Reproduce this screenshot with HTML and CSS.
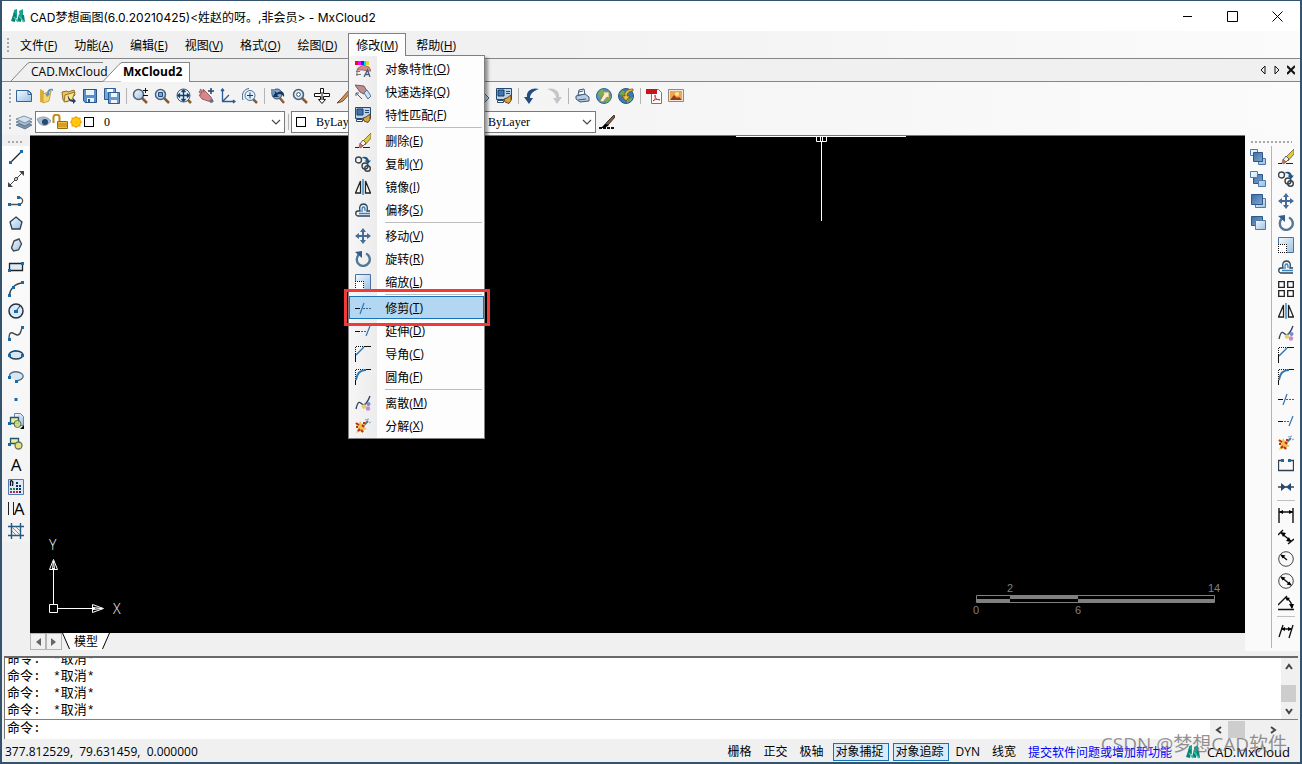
FILE: index.html
```html
<!DOCTYPE html>
<html lang="zh-CN">
<head>
    <meta charset="utf-8">
    <title>CAD梦想画图</title>
    <link rel="stylesheet" href="styles.css">
</head>
<body>
    <!-- Icon sprite -->
    <svg class="sprite" aria-hidden="true">
        <defs>
            <linearGradient id="gBlue" x1="0" y1="0" x2="1" y2="1"><stop offset="0" stop-color="#f4faff"/><stop offset="1" stop-color="#9cc0e2"/></linearGradient>
            <linearGradient id="gDark" x1="0" y1="0" x2="1" y2="1"><stop offset="0" stop-color="#3d6ea5"/><stop offset="1" stop-color="#7fa5d0"/></linearGradient>
        </defs>
        <symbol id="logo" viewBox="0 0 16 16"><path d="M4 2l3-1v9l-4 1zM9 3l4-2v9l-3 1z" fill="#12a58c"/><path d="M1 13l3-9 2 3-1 7zM7 13l2-7 2 3 0 5zM12 7l2 0 1 7-3-1z" fill="#0b7f70"/><path d="M4 9l4 5M9 8l5 6" stroke="#3cc4ac" stroke-width="1.5"/></symbol>
        <symbol id="new" viewBox="0 0 16 16"><path d="M.5 2.500h12l3 3v8H.5z" fill="url(#gBlue)" stroke="#33639a"/><path d="M12 2.500v4h3.500z" fill="#fff" stroke="#33639a"/></symbol>
        <symbol id="open" viewBox="0 0 16 16"><path d="M2 1l4 2v12l-4-1z" fill="#d9ad3c"/><path d="M5 6l8-3-2 10-6 2z" fill="#f7d66c" stroke="#d0a63a"/><path d="M15 1c-4-1-6 1-6 5l-2-1 2 4 3-3-1-1c0-2 1-3 4-2z" fill="#5e93c4"/></symbol>
        <symbol id="open2" viewBox="0 0 16 16"><path d="M2 4l5-1 1 1 6-2 1 5-8 7-4-2z" fill="#e9c65a" stroke="#92702a"/><path d="M5 7l10-3-3 8-8 2z" fill="#fae391" stroke="#92702a"/><path d="M8 7c1 4 3 5 5 5v-2l3 3-3 3v-2c-3 0-6-3-5-7z" fill="#234468"/></symbol>
        <symbol id="save" viewBox="0 0 16 16"><path d="M1.500 1.500h13v13H3l-1.500-2z" fill="#5990cc" stroke="#255489"/><path d="M4 2h8v5H4zM5 10h7v4H5z" fill="#e9f3fb"/><path d="M6 11h2v3H6z" fill="#255489"/></symbol>
        <symbol id="saveall" viewBox="0 0 16 16"><path d="M.5.5h11v11H.5z" fill="#7aa6d6" stroke="#2d5c91"/><path d="M3 1h6v3H3z" fill="#fff"/><path d="M4.500 4.500h11v11h-11z" fill="#6a9cd0" stroke="#2d5c91"/><path d="M7 5h6v4H7zM7 12h6v3H7z" fill="#eef6fc"/></symbol>
        <symbol id="lens" viewBox="0 0 16 16"><path d="M10 10l5 5" stroke="#8a5b33" stroke-width="2.500"/><circle cx="6.500" cy="6.500" r="5" fill="url(#gBlue)" stroke="#4c6178" stroke-width="1.500"/></symbol>
        <symbol id="zoomrt" viewBox="0 0 16 16"><use href="#lens"/><path d="M11 2.500h5M13.500 0v5M11 7.500h5" stroke="#111" fill="none"/></symbol>
        <symbol id="zoomwin" viewBox="0 0 16 16"><use href="#lens"/><path d="M4.500 4.500h4v4h-4z" fill="#7fa6cf" stroke="#1c4c80"/></symbol>
        <symbol id="zoomext" viewBox="0 0 16 16"><path d="M11 11l4 4" stroke="#8a5b33" stroke-width="2.500"/><circle cx="7.500" cy="7.500" r="6.500" fill="#e1eef9" stroke="#3f5a76"/><path d="M7.500 2v11M2 7.500h11M5.500 4l2-2 2 2M5.500 11l2 2 2-2M4 5.500l-2 2 2 2M11 5.500l2 2-2 2" stroke="#173e66" stroke-width="1.400" fill="none"/></symbol>
        <symbol id="pan" viewBox="0 0 16 16"><path d="M1 3l3 2-2-4 4 3-1-3 8 8 2 5-5-1-6-2-3-4 2 0z" fill="#d3868b" stroke="#a35c64"/><path d="M13 0v6M10 3h6" stroke="#23456b" stroke-width="1.500"/><path d="M12 14l3-2" stroke="#5f7387" stroke-width="3"/></symbol>
        <symbol id="ucs" viewBox="0 0 16 16"><path d="M2.500 1v12.500H15M2.500 13.500L9 7M1 3l1.500-2L4 3M13 12l2 1.500-2 1.500" fill="none" stroke="#2c5b94" stroke-width="1.300"/></symbol>
        <symbol id="zoomcen" viewBox="0 0 16 16"><path d="M11 11l4 4" stroke="#8a5b33" stroke-width="2.500"/><circle cx="8" cy="7.500" r="5" fill="#e5f0fa" stroke="#4573a5"/><path d="M8 4.500v6M5 7.500h6" stroke="#173e66"/><path d="M1 12C-1 6 2 1 7 .5" fill="none" stroke="#456789"/></symbol>
        <symbol id="zoomprev" viewBox="0 0 16 16"><path d="M9 9l5 6" stroke="#8a5b33" stroke-width="2.500"/><circle cx="7" cy="6" r="5" fill="#84aacf" stroke="#35506d"/><path d="M14 9c1-5-3-7-7-4L5 3 3 9l6 0-2-2c3-2 5-1 7 2z" fill="#18365c"/><path d="M1 1h4v5H1z" fill="#6f93bb"/></symbol>
        <symbol id="zoomall" viewBox="0 0 16 16"><use href="#lens"/><circle cx="6.500" cy="6.500" r="3" fill="#667c91" stroke="#fff"/><path d="M5 6.500h3M6.500 5v3" stroke="#fff"/></symbol>
        <symbol id="cross3" viewBox="0 0 16 16"><path d="M6.500.5h3v5h6v3h-6v3h2l-3.500 4-3.500-4h2v-3h-6v-3h6z" fill="#fff" stroke="#111"/><path d="M8 4v8" stroke="#111"/></symbol>
        <symbol id="pencil" viewBox="0 0 16 16"><path d="M14 1L5 11l-4 4c3-1 5-1 6-2l9-10z" fill="#d7924c" stroke="#6b4a2b"/></symbol>
        <symbol id="match" viewBox="0 0 16 16"><path d="M.5.5h15v11H.5z" fill="#bcd4ea" stroke="#26496f"/><path d="M2 2h6v6H2z" fill="#3f75b3" stroke="#1c3a5c"/><path d="M10 3.500h4M10 5.500h4" stroke="#26496f"/><path d="M1.500 12.500h6v2h-6z" fill="#fff" stroke="#26496f"/><path d="M15 7l-4 3-3 1 1 3 4 1.500 2-3z" fill="#d9a441" stroke="#67441a"/></symbol>
        <symbol id="eraserb" viewBox="0 0 16 16"><path d="M3 5l4-3 8 8-4 4z" fill="#c6dcef" stroke="#48698c"/></symbol>
        <symbol id="undo" viewBox="0 0 16 16"><path d="M15 1C8-1 2 3 3 9H0l5 7 4-6H6c0-4 3-7 9-9z" fill="#234d80"/></symbol>
        <symbol id="redo" viewBox="0 0 16 16"><path d="M1 1c7-2 13 2 12 8h3l-5 7-4-6h3c0-4-3-7-9-9z" fill="#c3c6ca"/></symbol>
        <symbol id="print" viewBox="0 0 16 16"><path d="M4 7l1-5 5-1 1 6z" fill="#fff" stroke="#3b5679"/><path d="M2 8l9-2 4 3v4l-9 1-4-3z" fill="#b9cbe0" stroke="#3b5679"/><path d="M4 12l8-1M5 4l4-1" stroke="#3b5679"/></symbol>
        <symbol id="globe1" viewBox="0 0 16 16"><circle cx="8" cy="8" r="7.500" fill="#4f8fc6" stroke="#35648f"/><path d="M2 5l4-4 3 3-3 4-3 2zM9 11l6-3-1 4-4 3z" fill="#7cae4c"/><path d="M4 13l4-7-1-2h6v6l-2-1-4 5z" fill="#f6efc8" stroke="#b78a36" stroke-width=".8"/></symbol>
        <symbol id="globe2" viewBox="0 0 16 16"><circle cx="8" cy="8" r="7.500" fill="#3b7bb0" stroke="#2b567d"/><path d="M1 6l4-4 3 4-3 2zM9 12l6-3-2 4-4 2z" fill="#76a845"/><path d="M15 1c-6 0-9 3-8 7H4l4 5 4-5H9c0-3 2-5 6-5z" fill="#f2c23c" stroke="#75551a" stroke-width=".8"/></symbol>
        <symbol id="pdf" viewBox="0 0 16 16"><path d="M5.500 1.500h7l3 3v11h-10z" fill="#fff" stroke="#777"/><path d="M0 1h11v5H0z" fill="#c7131a"/><path d="M7 13c3-2 3-6 2-6s0 5 5 5c1 0-3-2-7 1z" fill="none" stroke="#d2383d"/></symbol>
        <symbol id="image" viewBox="0 0 16 16"><path d="M.5 1.500h15v12H.5z" fill="#f1e7da" stroke="#8d8984"/><path d="M2 3h12v9H2z" fill="#f0a54b"/><path d="M2 12l4-5 3 3 2-1 3 3z" fill="#983a21"/><circle cx="9" cy="6" r="2" fill="#fce6a1"/></symbol>
        <symbol id="layers" viewBox="0 0 16 16"><path d="M0 11l8-3 8 3-7 4z" fill="#7f93a8" stroke="#45617e" stroke-width=".7"/><path d="M0 8l8-3 8 3-7 4z" fill="#a9bdd0" stroke="#45617e" stroke-width=".7"/><path d="M0 5l8-3 8 3-7 4z" fill="#d3e2ef" stroke="#55718e" stroke-width=".7"/></symbol>
        <symbol id="eye" viewBox="0 0 16 16"><path d="M1 5c5-3 10-3 14 2-4 6-9 5-12 2z" fill="#a8bed4" stroke="#8da2b8"/><circle cx="9" cy="8" r="3" fill="#28496d"/></symbol>
        <symbol id="lock" viewBox="0 0 16 16"><path d="M1.500 9V3c0-3 6-3 6 0v4" fill="none" stroke="#c08a1c" stroke-width="2"/><path d="M5.500 7.500h10v7h-10z" fill="#f1bd3c" stroke="#9b6b0c"/><path d="M6 10h9M6 12h9" stroke="#b78016"/></symbol>
        <symbol id="sun" viewBox="0 0 16 16"><path d="M8 2l2 1.500 2.500 0 0 2.500L14 8l-1.500 2v2.500H10L8 14l-2-1.500H3.500V10L2 8l1.500-2V3.500H6z" fill="#fc9f0b"/><circle cx="8" cy="8" r="4" fill="#ffc90c"/></symbol>
        <symbol id="lwt" viewBox="0 0 16 16"><path d="M15 1L8 8l-3 4 4-1 7-8z" fill="#8a5a34" stroke="#333"/><path d="M0 14h16" stroke="#111" stroke-width="2" stroke-dasharray="3 1"/><path d="M6 10l4 1-4 3H2z"/></symbol>
        <symbol id="line" viewBox="0 0 16 16"><path d="M2 14L14 2" stroke="#222" stroke-width="1.300"/><path d="M1 12h3v3H1zM12 1h3v3h-3z" fill="#1b6aa8"/></symbol>
        <symbol id="xline" viewBox="0 0 16 16"><path d="M1 15L15 1" stroke="#444"/><path d="M0 16v-5l5 5zM16 0v5l-5-5z" fill="#444"/><circle cx="8" cy="8" r="1.500" fill="#fff" stroke="#333"/></symbol>
        <symbol id="pline" viewBox="0 0 16 16"><path d="M1 11.500h9c6 0 6-7 1-7" fill="none" stroke="#555" stroke-width="1.300"/><path d="M0 10h3v3H0zM10 10h3v3h-3zM9 3h3v3H9z" fill="#1b6aa8"/></symbol>
        <symbol id="polygon" viewBox="0 0 16 16"><path d="M8 2l6 5-2 7H4L2 7z" fill="url(#gBlue)" stroke="#2d4050" stroke-width="1.300"/></symbol>
        <symbol id="polyline2" viewBox="0 0 16 16"><path d="M6 4l5-2 2.500 5-3 6-5 1-2-3z" fill="url(#gBlue)" stroke="#444c52" stroke-width="1.400"/></symbol>
        <symbol id="rect" viewBox="0 0 16 16"><path d="M1.500 4.500h13v7h-13z" fill="#dcecfa" stroke="#222" stroke-width="1.300"/><path d="M0 10h3v3H0zM13 3h3v3h-3z" fill="#1b6aa8"/></symbol>
        <symbol id="arc" viewBox="0 0 16 16"><path d="M1.500 14C2 8 7 2 15 2" fill="none" stroke="#444" stroke-width="1.500"/><path d="M0 13h3v3H0zM4 5h3v3H4zM13 0h3v3h-3z" fill="#1b6aa8"/></symbol>
        <symbol id="circle" viewBox="0 0 16 16"><circle cx="8" cy="8" r="7" fill="#d9ebfa" stroke="#26333e" stroke-width="1.500"/><path d="M8 8l4-5" stroke="#26333e"/><path d="M6 7h4v3H6z" fill="#1b6aa8"/></symbol>
        <symbol id="spline" viewBox="0 0 16 16"><path d="M1 14c0-12 6-3 9-4 4-1 2-6 5-8" fill="none" stroke="#444" stroke-width="1.400"/><path d="M0 13h3v3H0zM13 1h3v3h-3z" fill="#1b6aa8"/></symbol>
        <symbol id="ellipse" viewBox="0 0 16 16"><ellipse cx="8" cy="8" rx="7" ry="4" fill="#d5e6f4" stroke="#303c47" stroke-width="1.400"/><path d="M0 7h3v3H0zM13 7h3v3h-3zM6 3h3v2H6z" fill="#1b6aa8"/></symbol>
        <symbol id="earc" viewBox="0 0 16 16"><path d="M2 8C0 4 6 2 10 3c8 2 6 8-2 9" fill="#d5e6f4" stroke="#5b6e80" stroke-width="1.400"/><path d="M0 7h3v3H0zM7 11h3v3H7z" fill="#1b6aa8"/></symbol>
        <symbol id="point" viewBox="0 0 16 16"><path d="M6.500 7h3v3h-3z" fill="#1b6aa8"/></symbol>
        <symbol id="block" viewBox="0 0 16 16"><path d="M6.500.5h6l3 3v9h-9z" fill="url(#gBlue)" stroke="#5d88b8"/><path d="M2.500 4.500h8v6h-8z" fill="#f1ef94" stroke="#26576f" stroke-width="1.300"/><circle cx="9.500" cy="11" r="3.500" fill="#dfe67f" fill-opacity=".8" stroke="#4c6b53"/><path d="M0 9h3v3H0z" fill="#1b6aa8"/><path d="M16 12v4h-4z"/></symbol>
        <symbol id="insert" viewBox="0 0 16 16"><path d="M2.500 3.500h8v5h-8z" fill="#f1ef94" stroke="#26576f" stroke-width="1.300"/><circle cx="10.500" cy="10.500" r="3.500" fill="#dfe67f" stroke="#637162" stroke-width="1.300"/><path d="M0 8h3v3H0z" fill="#1b6aa8"/></symbol>
        <symbol id="table" viewBox="0 0 16 16"><path d="M.5.5h15v15H.5z" fill="#dce9fa" stroke="#4e7bb8"/><path d="M2.500 7V2c2-1 3 1 2 5" fill="none" stroke="#111" stroke-width="1.300"/><path d="M8 3h2v2H8zM8 6h2v2H8zM11 6h2v2h-2zM11 9h2v2h-2zM8 9h2v2H8zM11 12h2v2h-2z" fill="#1b315c"/><path d="M2 12h2v2H2zM5 12h2v2H5zM8 12h2v2H8z" fill="#c3273d"/><path d="M2 9h2v2H2zM5 9h2v2H5z" fill="#2a7b43"/></symbol>
        <symbol id="hatch" viewBox="0 0 16 16"><path d="M3.500 0v16M12.500 0v16M0 3.500h16M0 12.500h16" stroke="#245a82" stroke-width="1.400"/><path d="M4 8l4 4M4 4l8 8M8 4l4 4" stroke="#5c9ac5"/></symbol>
        <symbol id="front1" viewBox="0 0 16 16"><path d="M.5.5h7v6h-7zM8.500 9.500h7v6h-7z" fill="url(#gBlue)" stroke="#4c7aa9"/><path d="M3.500 3.500h9v9h-9z" fill="url(#gDark)" stroke="#2d5788"/></symbol>
        <symbol id="front2" viewBox="0 0 16 16"><path d="M3.500 3.500h9v9h-9z" fill="url(#gDark)" stroke="#2d5788"/><path d="M.5.5h7v6h-7zM8.500 9.500h7v6h-7z" fill="url(#gBlue)" stroke="#4c7aa9"/></symbol>
        <symbol id="front3" viewBox="0 0 16 16"><path d="M5.500 5.500h10v9h-10z" fill="url(#gBlue)" stroke="#4c7aa9"/><path d="M1.500 1.500h11v10h-11z" fill="url(#gDark)" stroke="#2d5788"/></symbol>
        <symbol id="front4" viewBox="0 0 16 16"><path d="M1.500 1.500h11v9h-11z" fill="url(#gDark)" stroke="#2d5788"/><path d="M5.500 5.500h10v9h-10z" fill="url(#gBlue)" stroke="#4c7aa9"/></symbol>
        <symbol id="erase" viewBox="0 0 16 16"><path d="M16 0v5l-6 7-3-3z" fill="#e2c93b" stroke="#6b6130" stroke-width=".8"/><path d="M8 7l3 3-3 3-3-2z" fill="#f3f3f3" stroke="#444" stroke-width=".8"/><path d="M5 10l3 3-2 2-2-1z" fill="#c97363" stroke="#7c3c33" stroke-width=".5"/><path d="M0 14.500h4M8 14.500h7" stroke="#222"/></symbol>
        <symbol id="copy" viewBox="0 0 16 16"><g fill="none" stroke="#39424a" stroke-width="1.400"><circle cx="3.500" cy="4" r="3"/><circle cx="10" cy="10" r="3"/><circle cx="12.500" cy="12.500" r="2.800"/></g><path d="M6 2.500c3-3 7-2 8 2h2L13 8 9.500 4.500h2C10 2 8 2 6 2.500z" fill="#1d5384"/></symbol>
        <symbol id="mirror" viewBox="0 0 16 16"><path d="M5.500 2v12h-5zM10.500 2v12h5z" fill="#fff" stroke="#222" stroke-width="1.300"/><path d="M8 0v16" stroke="#3988bd" stroke-width="1.500"/></symbol>
        <symbol id="offset" viewBox="0 0 16 16"><path d="M15 14H3c-3 0-3-5 0-5h2c-1-4 0-7 3.500-7S13 5 12 9h3" fill="none" stroke="#26435c" stroke-width="1.300"/><path d="M15 11.500H4M7 10c0-4 0-5 1.500-5S10 6 10 9" fill="none" stroke="#3a84c2" stroke-width="1.300"/></symbol>
        <symbol id="move" viewBox="0 0 16 16"><path d="M8 0l3 4H9v3h3V5l4 3-4 3V9H9v3h2l-3 4-3-4h2V9H4v2L0 8l4-3v2h3V4H5z" fill="#456c97"/></symbol>
        <symbol id="rotate" viewBox="0 0 16 16"><path d="M11 2.500a6.500 6.500 0 1 1-7 1" fill="none" stroke="#537596" stroke-width="2.400"/><path d="M0 1l7-1v7z" fill="#315c8b"/></symbol>
        <symbol id="scale" viewBox="0 0 16 16"><path d="M.5.5h15v15H.5z" fill="url(#gBlue)" stroke="#4772a3"/><path d="M0 7h9v9H0z" fill="#fff"/><path d="M0 7.500h9M0 15.500h9M.5 7v9M8.500 7v9" stroke="#111" stroke-dasharray="1 1"/></symbol>
        <symbol id="array" viewBox="0 0 16 16"><path d="M.7.7h5.600v5.600H.7zM9.700.7h5.600v5.600H9.700zM.7 9.700h5.600v5.600H.7zM9.700 9.700h5.600v5.600H9.700z" fill="#fff" stroke="#222" stroke-width="1.300"/></symbol>
        <symbol id="disc" viewBox="0 0 16 16"><path d="M1 14C3 5 5 7 7 9s5 0 8-8" fill="none" stroke="#33415c" stroke-width="1.300"/><circle cx="9" cy="11.500" r="2.300" fill="#e3cf6d"/><circle cx="13.500" cy="9" r="2" fill="#6f8fd0"/><circle cx="13" cy="13.500" r="2.200" fill="#c98acb"/></symbol>
        <symbol id="chamfer" viewBox="0 0 16 16"><path d="M.5 10V.5H10" fill="none" stroke="#111" stroke-dasharray="1 1"/><path d="M.5 16V8M9 .5h7" stroke="#111"/><path d="M1 9l8-8" stroke="#2f76b5" stroke-width="1.500"/></symbol>
        <symbol id="fillet" viewBox="0 0 16 16"><path d="M.5 10V.5H10" fill="none" stroke="#111" stroke-dasharray="1 1"/><path d="M.5 16v-5M11 .5h5" stroke="#111"/><path d="M1 11C2 4 6 1 11 1" fill="none" stroke="#2f76b5" stroke-width="1.800"/></symbol>
        <symbol id="trim" viewBox="0 0 16 16"><path d="M0 8.500h5" stroke="#111"/><path d="M8 8.500h8" stroke="#28659b" stroke-dasharray="2 1"/><path d="M5 14L9 3" stroke="#2f76b5" stroke-width="1.200"/></symbol>
        <symbol id="extend" viewBox="0 0 16 16"><path d="M0 8.500h5" stroke="#111"/><path d="M6 8.500h6" stroke="#28659b" stroke-dasharray="2 1"/><path d="M11 13l4-10" stroke="#2f76b5" stroke-width="1.200"/></symbol>
        <symbol id="explode" viewBox="0 0 16 16"><path d="M6 10l7-7" stroke="#58708a" stroke-width="2"/><path d="M10 2l4-1M14 5l2-1" stroke="#77a2c9"/><path d="M0 5l4 1 1-3 2 3 3-1-1 4 3 2-3 1-1 3-2-2-5 2 2-5z" fill="#ecc34b"/><path d="M1 5l3 2M7 7l2 2M3 13l2-2M6 12l2 2M1 9h2M8 5h2" stroke="#b92e26" stroke-width="2"/></symbol>
        <symbol id="break" viewBox="0 0 16 16"><path d="M4 3.500H.5v10h15v-10H12" fill="none" stroke="#33404d" stroke-width="1.300"/><path d="M3 2h3v3H3zM10 2h3v3h-3z" fill="#1b6aa8"/></symbol>
        <symbol id="join" viewBox="0 0 16 16"><path d="M0 8h16" stroke="#222" stroke-width="1.300"/><path d="M3 4l5 4-5 4zM13 4L8 8l5 4z" fill="#234a6f"/></symbol>
        <symbol id="dimlin" viewBox="0 0 16 16"><path d="M1 1v15M15 1v15M1 5h14" fill="none" stroke="#111" stroke-width="1.400"/><path d="M1 5l4-2v4zM15 5l-4-2v4z"/></symbol>
        <symbol id="dimalign" viewBox="0 0 16 16"><path d="M0 6l5-5M10 15l6-5M3 4l10 8" stroke="#111" stroke-width="1.400"/><path d="M3 3l5 1-3 4zM13 13l-5-1 3-4z"/></symbol>
        <symbol id="dimrad" viewBox="0 0 16 16"><circle cx="8" cy="8" r="7.300" fill="#f8f8f8" stroke="#444"/><path d="M3 4l6 5" stroke="#111" stroke-width="1.400"/><path d="M2.500 3.500l5 1-3 3z"/></symbol>
        <symbol id="dimdia" viewBox="0 0 16 16"><circle cx="8" cy="8" r="7.300" fill="#f8f8f8" stroke="#444"/><path d="M3 4l10 8" stroke="#111" stroke-width="1.400"/><path d="M2.500 3.500l5 1-3 3zM13.500 12.500l-5-1 3-3z"/></symbol>
        <symbol id="dimang" viewBox="0 0 16 16"><path d="M0 14.500h16M0 10L9 1M8 3c4 2 6 5 6 10" fill="none" stroke="#111" stroke-width="1.300"/><path d="M7 2l5 1-3 3zM14 14l-3-5h5z"/></symbol>
        <symbol id="dimedit" viewBox="0 0 16 16"><path d="M1 14L5 2M11 15l4-13M3 6h11" stroke="#111" stroke-width="1.300"/><path d="M3 6l4-2v4zM14 6l-4-2v4z"/></symbol>
        <symbol id="props" viewBox="0 0 16 16"><path d="M0 0h4v4H0z" fill="#e11"/><path d="M3 0h3v4H3z" fill="#f0f"/><path d="M6 0h3v4H6z" fill="#22f"/><path d="M9 0h3v4H9z" fill="#0df"/><path d="M11 0h3v4h-3z" fill="#dd2"/><path d="M3 7l5-3 6 2 2 4-4 0-4-1-6 0z" fill="#d28b86" stroke="#8f5b5b" stroke-width=".8"/><path d="M1 10.500h4M1 13.500h5M2 9v6" stroke="#777"/><path d="M9 16l3.500-7L15 16M10.500 13.500H14" fill="none" stroke="#4a5e76" stroke-width="1.300"/></symbol>
        <symbol id="qselect" viewBox="0 0 16 16"><path d="M0 1l9 1 3 5-3 3-4-2z" fill="#bd8d90" stroke="#7d585d"/><path d="M9 9l3-3 4 6-3 3z" fill="#cfe1f1" stroke="#55718e"/><path d="M1 9l6 6M1 12V9h3" fill="none" stroke="#4a5e76"/></symbol>
        <symbol id="chev" viewBox="0 0 10 10"><path d="M1 3l4 4 4-4" fill="none" stroke="#444" stroke-width="1.100"/></symbol>
    </svg>

    <div class="app">
        <div class="titlebar">
            <svg class="logo"><use href="#logo"/></svg>
            <span class="title">CAD梦想画图(6.0.20210425)&lt;姓赵的呀。,非会员&gt; - MxCloud2</span>
            <div class="winbtns">
                <button aria-label="最小化"><svg viewBox="0 0 11 11"><path d="M1 5.500h9"/></svg></button>
                <button aria-label="最大化"><svg viewBox="0 0 11 11"><path d="M.5.5h10v10H.5z"/></svg></button>
                <button aria-label="关闭"><svg viewBox="0 0 11 11"><path d="M.5.5l10 10M10.500.5l-10 10"/></svg></button>
            </div>
        </div>

        <nav class="menubar">
            <button>文件(<u>F</u>)</button>
            <button>功能(<u>A</u>)</button>
            <button>编辑(<u>E</u>)</button>
            <button>视图(<u>V</u>)</button>
            <button>格式(<u>O</u>)</button>
            <button>绘图(<u>D</u>)</button>
            <div class="menu">
                <button class="open">修改(<u>M</u>)</button>
                <div class="dropdown">
                    <button><svg><use href="#props"/></svg>对象特性(<u>O</u>)</button>
                    <button><svg><use href="#qselect"/></svg>快速选择(<u>Q</u>)</button>
                    <button><svg><use href="#match"/></svg>特性匹配(<u>F</u>)</button>
                    <hr>
                    <button><svg><use href="#erase"/></svg>删除(<u>E</u>)</button>
                    <button><svg><use href="#copy"/></svg>复制(<u>Y</u>)</button>
                    <button><svg><use href="#mirror"/></svg>镜像(<u>I</u>)</button>
                    <button><svg><use href="#offset"/></svg>偏移(<u>S</u>)</button>
                    <hr>
                    <button><svg><use href="#move"/></svg>移动(<u>V</u>)</button>
                    <button><svg><use href="#rotate"/></svg>旋转(<u>R</u>)</button>
                    <button><svg><use href="#scale"/></svg>缩放(<u>L</u>)</button>
                    <hr>
                    <button class="active"><svg><use href="#trim"/></svg>修剪(<u>T</u>)</button>
                    <button><svg><use href="#extend"/></svg>延伸(<u>D</u>)</button>
                    <button><svg><use href="#chamfer"/></svg>导角(<u>C</u>)</button>
                    <button><svg><use href="#fillet"/></svg>圆角(<u>F</u>)</button>
                    <hr>
                    <button><svg><use href="#disc"/></svg>离散(<u>M</u>)</button>
                    <button><svg><use href="#explode"/></svg>分解(<u>X</u>)</button>
                </div>
            </div>
            <button>帮助(<u>H</u>)</button>
        </nav>

        <div class="tabs">
            <button class="tab"><svg class="slope" viewBox="0 0 18 19"><path d="M0 19L16 2l2-1.500"/></svg><span>CAD.MxCloud</span></button>
            <button class="tab current"><svg class="slope" viewBox="0 0 18 19"><path d="M0 19L16 2l2-1.500V19z" stroke="none"/><path d="M0 19L16 2l2-1.500"/></svg><span>MxCloud2</span></button>
            <div class="tabnav">
                <button aria-label="上一个"><svg viewBox="0 0 8 10"><path d="M6 1L2 5l4 4z"/></svg></button>
                <button aria-label="下一个"><svg viewBox="0 0 8 10"><path d="M2 1l4 4-4 4z"/></svg></button>
                <button aria-label="关闭标签"><svg viewBox="0 0 8 10"><path class="thick" d="M0 1l8 8M8 1L0 9"/></svg></button>
            </div>
        </div>

        <div class="toolbar">
            <span class="grip"></span>
            <button aria-label="新建"><svg><use href="#new"/></svg></button>
            <button aria-label="打开"><svg><use href="#open"/></svg></button>
            <button aria-label="打开云图"><svg><use href="#open2"/></svg></button>
            <button aria-label="保存"><svg><use href="#save"/></svg></button>
            <button aria-label="另存为"><svg><use href="#saveall"/></svg></button>
            <span class="sep"></span>
            <button aria-label="实时缩放"><svg><use href="#zoomrt"/></svg></button>
            <button aria-label="窗口缩放"><svg><use href="#zoomwin"/></svg></button>
            <button aria-label="范围缩放"><svg><use href="#zoomext"/></svg></button>
            <button aria-label="平移"><svg><use href="#pan"/></svg></button>
            <button aria-label="坐标系"><svg><use href="#ucs"/></svg></button>
            <button aria-label="中心缩放"><svg><use href="#zoomcen"/></svg></button>
            <span class="sep"></span>
            <button aria-label="上一视图"><svg><use href="#zoomprev"/></svg></button>
            <button aria-label="全部缩放"><svg><use href="#zoomall"/></svg></button>
            <button aria-label="定位"><svg><use href="#cross3"/></svg></button>
            <button aria-label="绘制"><svg><use href="#pencil"/></svg></button>
            <button aria-label="复制"><svg><use href="#copy"/></svg></button>
            <button aria-label="移动"><svg><use href="#move"/></svg></button>
            <button aria-label="旋转"><svg><use href="#rotate"/></svg></button>
            <button aria-label="镜像"><svg><use href="#mirror"/></svg></button>
            <span class="sep"></span>
            <button aria-label="特性"><svg><use href="#props"/></svg></button>
            <button aria-label="橡皮"><svg><use href="#eraserb"/></svg></button>
            <button aria-label="特性匹配"><svg><use href="#match"/></svg></button>
            <span class="sep"></span>
            <button aria-label="撤销"><svg><use href="#undo"/></svg></button>
            <button aria-label="重做"><svg><use href="#redo"/></svg></button>
            <span class="sep"></span>
            <button aria-label="打印"><svg><use href="#print"/></svg></button>
            <button aria-label="发布"><svg><use href="#globe1"/></svg></button>
            <button aria-label="下载"><svg><use href="#globe2"/></svg></button>
            <span class="sep"></span>
            <button aria-label="输出PDF"><svg><use href="#pdf"/></svg></button>
            <button aria-label="输出图片"><svg><use href="#image"/></svg></button>
        </div>

        <div class="toolbar props">
            <span class="grip"></span>
            <button aria-label="图层"><svg><use href="#layers"/></svg></button>
            <div class="combo layer">
                <svg><use href="#eye"/></svg><svg><use href="#lock"/></svg><svg><use href="#sun"/></svg>
                <span class="swatch"></span>
                <select aria-label="当前图层"><option>0</option></select>
                <svg class="chev"><use href="#chev"/></svg>
            </div>
            <span class="sep"></span>
            <div class="combo color">
                <span class="swatch"></span>
                <select aria-label="颜色"><option>ByLayer</option></select>
                <svg class="chev"><use href="#chev"/></svg>
            </div>
            <span class="sep"></span>
            <div class="combo ltype">
                <select aria-label="线型"><option>ByLayer</option></select>
                <svg class="chev"><use href="#chev"/></svg>
            </div>
            <button aria-label="线宽"><svg><use href="#lwt"/></svg></button>
        </div>

        <div class="main">
            <div class="side left">
                <span class="grip"></span>
                <div class="tools">
                    <button aria-label="直线"><svg><use href="#line"/></svg></button>
                    <button aria-label="构造线"><svg><use href="#xline"/></svg></button>
                    <button aria-label="多段线"><svg><use href="#pline"/></svg></button>
                    <button aria-label="正多边形"><svg><use href="#polygon"/></svg></button>
                    <button aria-label="多边形"><svg><use href="#polyline2"/></svg></button>
                    <button aria-label="矩形"><svg><use href="#rect"/></svg></button>
                    <button aria-label="圆弧"><svg><use href="#arc"/></svg></button>
                    <button aria-label="圆"><svg><use href="#circle"/></svg></button>
                    <button aria-label="样条曲线"><svg><use href="#spline"/></svg></button>
                    <button aria-label="椭圆"><svg><use href="#ellipse"/></svg></button>
                    <button aria-label="椭圆弧"><svg><use href="#earc"/></svg></button>
                    <button aria-label="点"><svg><use href="#point"/></svg></button>
                    <button aria-label="创建块"><svg><use href="#block"/></svg></button>
                    <button aria-label="插入块"><svg><use href="#insert"/></svg></button>
                    <button class="letter">A</button>
                    <button aria-label="图片"><svg><use href="#table"/></svg></button>
                    <button class="letter bar">A</button>
                    <button aria-label="填充"><svg><use href="#hatch"/></svg></button>
                </div>
            </div>

            <div class="center">
                <div class="canvas">
                    <svg class="cursor" viewBox="0 0 170 85">
                        <path d="M0 .5h170M85.500 6v79M80.500 0v5.500h10V0M84.500 0v5M86.500 0v5"/>
                    </svg>
                    <svg class="axes" viewBox="0 0 80 80">
                        <path d="M5.500 68V32M10 72.500h37M1.500 68.500h8v8h-8zM1.500 33.500l4-10 4 10zM4.500 33l1-8 1 8M44.500 68.500l11 4-11 4zM45 71.500l9 1-9 1"/>
                        <text x="1" y="14">Y</text>
                        <text x="65" y="78">X</text>
                    </svg>
                    <svg class="ruler" viewBox="0 0 246 34">
                        <path class="frame" d="M2.500 12.500h238v7h-238z"/>
                        <path class="fill" d="M3 16h33v3H3zM36 13h68v3H36zM104 16h136v3H104z"/>
                        <text x="33" y="9">2</text><text x="234" y="9">14</text>
                        <text x="-1" y="31">0</text><text x="101" y="31">6</text>
                    </svg>
                </div>
                <div class="modelrow">
                    <button class="arrow" aria-label="向左"><svg viewBox="0 0 8 10"><path d="M7 1L2 5l5 4z"/></svg></button>
                    <button class="arrow" aria-label="向右"><svg viewBox="0 0 8 10"><path d="M1 1l5 4-5 4z"/></svg></button>
                    <svg class="edge" viewBox="0 0 8 17"><path d="M0 0l7 16h1V0z"/><path class="ln" d="M.5 0l7 16"/></svg>
                    <button class="model">模型</button>
                    <svg class="edge" viewBox="0 0 8 17"><path d="M0 0h8L1 16H0z"/><path class="ln" d="M7.500 0l-7 16"/></svg>
                </div>
            </div>

            <div class="side right">
                <span class="grip"></span>
                <div class="cols">
                    <div class="tools">
                        <button aria-label="前置"><svg><use href="#front1"/></svg></button>
                        <button aria-label="后置"><svg><use href="#front2"/></svg></button>
                        <button aria-label="置于对象之上"><svg><use href="#front3"/></svg></button>
                        <button aria-label="置于对象之下"><svg><use href="#front4"/></svg></button>
                    </div>
                    <div class="tools">
                        <button aria-label="删除"><svg><use href="#erase"/></svg></button>
                        <button aria-label="复制"><svg><use href="#copy"/></svg></button>
                        <button aria-label="移动"><svg><use href="#move"/></svg></button>
                        <button aria-label="旋转"><svg><use href="#rotate"/></svg></button>
                        <button aria-label="缩放"><svg><use href="#scale"/></svg></button>
                        <button aria-label="偏移"><svg><use href="#offset"/></svg></button>
                        <button aria-label="阵列"><svg><use href="#array"/></svg></button>
                        <button aria-label="镜像"><svg><use href="#mirror"/></svg></button>
                        <button aria-label="离散"><svg><use href="#disc"/></svg></button>
                        <button aria-label="导角"><svg><use href="#chamfer"/></svg></button>
                        <button aria-label="圆角"><svg><use href="#fillet"/></svg></button>
                        <button aria-label="修剪"><svg><use href="#trim"/></svg></button>
                        <button aria-label="延伸"><svg><use href="#extend"/></svg></button>
                        <button aria-label="分解"><svg><use href="#explode"/></svg></button>
                        <button aria-label="打断"><svg><use href="#break"/></svg></button>
                        <button aria-label="合并"><svg><use href="#join"/></svg></button>
                        <span class="hsep"></span>
                        <button aria-label="线性标注"><svg><use href="#dimlin"/></svg></button>
                        <button aria-label="对齐标注"><svg><use href="#dimalign"/></svg></button>
                        <button aria-label="半径标注"><svg><use href="#dimrad"/></svg></button>
                        <button aria-label="直径标注"><svg><use href="#dimdia"/></svg></button>
                        <button aria-label="角度标注"><svg><use href="#dimang"/></svg></button>
                        <span class="hsep"></span>
                        <button aria-label="编辑标注"><svg><use href="#dimedit"/></svg></button>
                    </div>
                </div>
            </div>
        </div>

        <div class="command">
            <div class="log">
                <div class="lines">
                    <p><span>命令:</span><span>*取消*</span></p>
                    <p><span>命令:</span><span>*取消*</span></p>
                    <p><span>命令:</span><span>*取消*</span></p>
                    <p><span>命令:</span><span>*取消*</span></p>
                </div>
                <div class="vscroll">
                    <svg viewBox="0 0 10 10"><path d="M2 7l3-4 3 4"/></svg>
                    <span class="thumb"></span>
                    <svg viewBox="0 0 10 10"><path d="M2 3l3 4 3-4"/></svg>
                </div>
            </div>
            <div class="prompt">
                <label for="cmd">命令:</label>
                <input id="cmd" type="text">
                <div class="hscroll">
                    <svg viewBox="0 0 10 10"><path d="M7 2L3 5l4 3"/></svg>
                    <span class="thumb"></span>
                    <svg viewBox="0 0 10 10"><path d="M3 2l4 3-4 3"/></svg>
                </div>
            </div>
        </div>

        <div class="statusbar">
            <span class="coords">377.812529,&nbsp; 79.631459,&nbsp; 0.000000</span>
            <button>栅格</button>
            <button>正交</button>
            <button>极轴</button>
            <button class="on">对象捕捉</button>
            <button class="on">对象追踪</button>
            <button>DYN</button>
            <button>线宽</button>
            <a href="#">提交软件问题或增加新功能</a>
            <span class="brand"><svg class="logo"><use href="#logo"/></svg>CAD.MxCloud</span>
        </div>
        <div class="watermark">CSDN @梦想CAD软件</div>
    </div>
</body>
</html>
```

FILE: styles.css
```css
* {
    box-sizing: border-box;
}
body {
    margin: 0;
    font-family: "Open Sans", "Noto Sans CJK SC", sans-serif;
    font-size: 12px;
    color: #000;
}
button, input, select {
    margin: 0;
    padding: 0;
    border: 0;
    background: none;
    font: inherit;
    color: inherit;
}
svg {
    display: block;
    flex: none;
}
.sprite {
    position: absolute;
    width: 0;
    height: 0;
}
.app {
    position: relative;
    display: flex;
    flex-direction: column;
    height: 100vh;
    overflow: hidden;
    border: 2px solid #33536f;
    border-top-width: 1px;
    background: #f0f0f0;
}

/* title */
.titlebar {
    display: flex;
    align-items: center;
    height: 30px;
    padding-left: 8px;
    background: #fff;
}
.logo {
    width: 16px;
    height: 16px;
}
.title {
    flex: 1;
    padding-left: 4px;
    font-family: "Inter", "Noto Sans CJK SC", sans-serif;
}
.winbtns {
    display: flex;
}
.winbtns button {
    width: 45px;
    height: 30px;
}
.winbtns svg {
    width: 11px;
    height: 11px;
    margin: auto;
    fill: none;
    stroke: #000;
}

/* menu */
.menubar {
    display: flex;
    gap: 1px;
    height: 27px;
    padding: 2px 8px 0;
    background: linear-gradient(90deg, #f0f0f0 30%, #fbfbfb);
}
.menubar > button, .menu > button {
    height: 23px;
    padding: 0 8px;
    white-space: nowrap;
}
.menubar::before, .grip {
    content: "";
    flex: none;
    width: 2px;
    background: repeating-linear-gradient(#a8a8a8 0 2px, transparent 2px 4px);
}
.menubar::before {
    height: 15px;
    margin: 5px 2px 0 -3px;
}
.menu {
    position: relative;
    z-index: 5;
    margin: 0 1px 0 2px;
}
.menu > .open {
    position: relative;
    z-index: 2;
    padding: 0 7px;
    border: 1px solid #808080;
    border-bottom: 0;
    background: #fdfdfd;
}
.dropdown {
    position: absolute;
    top: 22px;
    left: 0;
    width: 137px;
    padding: 1px 0;
    border: 1px solid #808080;
    background: linear-gradient(90deg, #f6f6f6, #ececec 28px, #fdfdfd 28px);
    box-shadow: 3px 3px 3px rgba(0, 0, 0, 0.4);
}
.dropdown button {
    display: flex;
    align-items: center;
    width: 100%;
    height: 23px;
    padding-left: 6px;
    position: relative;
}
.dropdown svg {
    width: 16px;
    height: 16px;
    margin-right: 14px;
}
.dropdown hr {
    height: 1px;
    margin: 1px 2px 1px 36px;
    border: 0;
    background: #bdbdbd;
}
.dropdown .active {
    z-index: 1;
    background: #b3d7f3;
    box-shadow: inset 0 0 0 1px #1673b8;
}
.dropdown .active::after {
    content: "";
    position: absolute;
    inset: -7px -6px -7px -5px;
    border: 3px solid #f03a3a;
}

/* document tabs */
.tabs {
    display: flex;
    align-items: flex-end;
    height: 24px;
    padding-left: 9px;
    border-top: 1px solid #848788;
    border-bottom: 1px solid #848788;
}
.tab {
    display: flex;
    height: 19px;
}
.slope {
    width: 18px;
    height: 19px;
    fill: none;
    stroke: #848788;
}
.tab span {
    width: 74px;
    height: 19px;
    line-height: 17px;
    padding-left: 2px;
    border-top: 1px solid #848788;
    text-align: left;
}
.current {
    height: 20px;
    margin-bottom: -1px;
    font-weight: bold;
}
.current .slope {
    fill: #fff;
    height: 20px;
}
.current span {
    width: auto;
    height: 20px;
    line-height: 18px;
    padding: 0 7px 0 2px;
    border-right: 1px solid #848788;
    background: #fff;
}
.tabnav {
    display: flex;
    align-self: center;
    gap: 6px;
    margin-left: auto;
    padding-right: 5px;
}
.tabnav svg {
    width: 8px;
    height: 10px;
    fill: none;
    stroke: #111;
}
.tabnav .thick {
    stroke-width: 2;
}

/* toolbars */
.toolbar {
    display: flex;
    align-items: center;
    height: 28px;
    padding-left: 7px;
    background: linear-gradient(90deg, #f3f3f3 30%, #fbfbfb);
}
.props {
    height: 25px;
    padding-bottom: 1px;
}
.grip {
    height: 15px;
    margin-right: 2px;
}
.toolbar > button, .tools > button {
    flex: none;
    width: 22px;
    height: 22px;
}
.toolbar > button > svg, .tools > button > svg {
    width: 16px;
    height: 16px;
    margin: auto;
}
.sep {
    flex: none;
    width: 1px;
    height: 16px;
    margin: 0 2px 0 3px;
    background: #b4b4b4;
}
.combo {
    display: flex;
    align-items: center;
    height: 22px;
    padding-right: 3px;
    border: 1px solid #7a7a7a;
    background: #fff;
}
.combo svg {
    width: 16px;
    height: 16px;
}
.combo .chev {
    width: 10px;
    height: 10px;
}
.combo select {
    flex: 1;
    appearance: none;
    font: 12px "Liberation Serif", serif;
}
.layer {
    width: 250px;
}
.color {
    width: 150px;
    padding-left: 4px;
}
.ltype {
    width: 149px;
    padding-left: 40px;
}
.swatch {
    width: 10px;
    height: 10px;
    margin: 0 10px 0 0;
    border: 1px solid #000;
}

/* work area */
.main {
    display: flex;
    flex: 1;
    min-height: 0;
}
.side {
    display: flex;
    flex-direction: column;
    padding-top: 6px;
}
.side .grip {
    width: auto;
    height: 2px;
    margin: 0 8px 3px 6px;
    background: repeating-linear-gradient(90deg, #a8a8a8 0 2px, transparent 2px 4px);
}
.left {
    width: 28px;
}
.left .tools {
    width: 27px;
    padding-left: 3px;
    background: linear-gradient(#fdfdfd, #f3f3f3);
}
.tools {
    display: flex;
    flex-direction: column;
}
.tools .letter {
    font-size: 17px;
    line-height: 22px;
}
.tools .bar::before {
    content: "";
    display: inline-block;
    width: 4px;
    height: 13px;
    border: 1px solid #222;
    border-width: 0 1px;
}
.right {
    width: 55px;
    padding-bottom: 3px;
    background: #fafafa;
}
.cols {
    display: flex;
    flex: 1;
}
.cols .tools {
    padding: 0 2px;
}
.cols .tools + .tools {
    padding-left: 3px;
    border-left: 1px solid #b4b4b4;
}
.hsep {
    height: 1px;
    margin: 2px 2px 3px;
    background: #c0c0c0;
}
.center {
    display: flex;
    flex: 1;
    flex-direction: column;
    min-width: 0;
}
.canvas {
    position: relative;
    flex: 1;
    border-top: 1px solid #777;
    background: #000;
}
.canvas svg {
    position: absolute;
    fill: none;
    stroke: #fff;
}
.canvas text {
    stroke: none;
    fill: #fff;
    font: 300 14px "Open Sans", sans-serif;
}
.cursor {
    top: 0;
    left: 58.1%;
    width: 170px;
    height: 85px;
}
.axes {
    left: 18px;
    bottom: 17px;
    width: 80px;
    height: 80px;
}
.ruler {
    right: 25px;
    bottom: 16px;
    width: 246px;
    height: 34px;
    overflow: visible;
}
.ruler .frame {
    stroke: #808080;
}
.ruler .fill {
    fill: #808080;
    stroke: none;
}
.ruler text {
    fill: #808080;
    font: 11px "Liberation Sans", sans-serif;
}
.modelrow {
    display: flex;
    height: 18px;
    padding-bottom: 1px;
}
.arrow {
    width: 16px;
    border: 1px solid #b5b5b5;
}
.arrow svg {
    width: 8px;
    height: 10px;
    margin: auto;
    fill: #666;
}
.edge {
    width: 8px;
    height: 17px;
    fill: #fff;
}
.edge .ln {
    stroke: #000;
}
.model {
    width: 32px;
    background: #fff;
    line-height: 17px;
}

/* command window */
.command {
    margin: 5px 2px 0;
    border-top: 2px solid #696969;
    border-left: 1px solid #777;
    background: #fff;
    font: 13px/17px "Liberation Mono", "Noto Sans CJK SC", monospace;
}
.log {
    display: flex;
    height: 61px;
}
.lines {
    display: flex;
    flex: 1;
    flex-direction: column;
    justify-content: flex-end;
    overflow: hidden;
}
.lines p {
    display: flex;
    flex: none;
    height: 17px;
    margin: 0;
    padding-left: 2px;
}
.lines p span:first-child {
    width: 46px;
}
.vscroll, .hscroll {
    display: flex;
    align-items: center;
    background: #f0f0f0;
}
.vscroll {
    flex-direction: column;
    width: 17px;
    padding: 4px 2px 3px 0;
}
.vscroll svg, .hscroll svg {
    width: 10px;
    height: 10px;
    fill: none;
    stroke: #444;
    stroke-width: 2;
}
.vscroll .thumb {
    width: 15px;
    height: 17px;
    margin: auto 0 4px;
    background: #cdcdcd;
}
.prompt {
    display: flex;
    height: 20px;
    padding-left: 2px;
    border-top: 1px solid #808080;
}
.prompt input {
    flex: 1;
    outline: 0;
}
.hscroll {
    width: 88px;
    padding: 0 20px 0 4px;
}
.hscroll .thumb {
    width: 17px;
    height: 17px;
    margin: 0 auto 0 4px;
    background: #cdcdcd;
}

/* status bar */
.statusbar {
    display: flex;
    align-items: center;
    height: 23px;
    padding: 2px 10px 0 3px;
    white-space: nowrap;
}
.coords {
    flex: 1;
}
.statusbar button {
    height: 18px;
    margin-right: 2px;
    padding: 0 5px;
    line-height: 18px;
}
.statusbar .on {
    margin: 0 2px;
    padding: 0 4px 0 2px;
    border: 1px solid #1673b8;
    background: #d9ebf9;
    line-height: 16px;
}
.statusbar a {
    margin: 0 13px 0 5px;
    color: #00f;
    text-decoration: none;
}
.brand {
    display: flex;
    align-items: center;
    gap: 6px;
    font-size: 13px;
}
.watermark {
    position: absolute;
    right: 13px;
    bottom: 5px;
    font-size: 19px;
    line-height: 26px;
    color: rgba(110, 110, 110, 0.75);
    pointer-events: none;
}
```
